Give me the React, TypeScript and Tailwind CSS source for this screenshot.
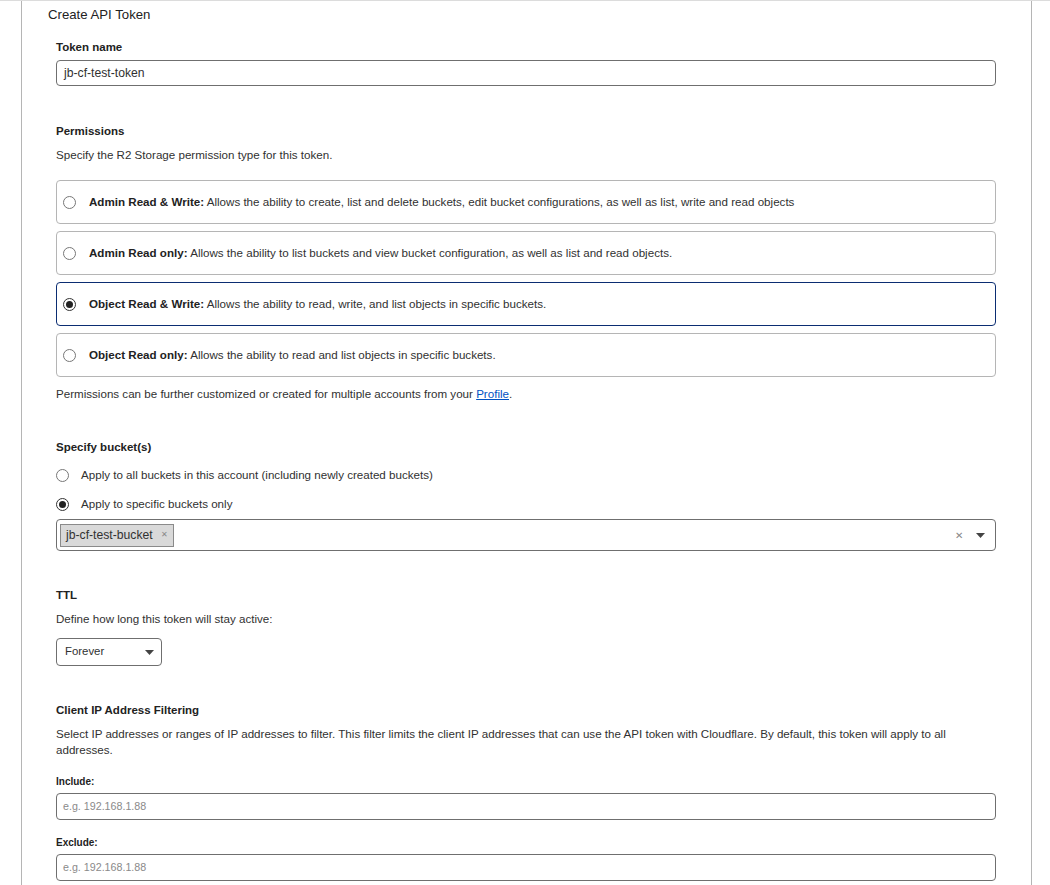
import React from "react";

const font = { fontFamily: '"Liberation Sans", Arial, sans-serif' };

function Radio({ checked }: { checked?: boolean }) {
  return (
    <span
      className={
        "flex h-[13px] w-[13px] shrink-0 items-center justify-center rounded-full border " +
        (checked ? "border-[#333]" : "border-[#777]")
      }
    >
      {checked && <span className="h-[7px] w-[7px] rounded-full bg-[#222]" />}
    </span>
  );
}

function Caret() {
  return (
    <svg width="9" height="5" viewBox="0 0 9 5">
      <path d="M0 0 L9 0 L4.5 5 Z" fill="#444" />
    </svg>
  );
}

const options = [
  {
    t: "Admin Read & Write:",
    d: " Allows the ability to create, list and delete buckets, edit bucket configurations, as well as list, write and read objects",
  },
  {
    t: "Admin Read only:",
    d: " Allows the ability to list buckets and view bucket configuration, as well as list and read objects.",
  },
  {
    t: "Object Read & Write:",
    d: " Allows the ability to read, write, and list objects in specific buckets.",
    sel: true,
  },
  {
    t: "Object Read only:",
    d: " Allows the ability to read and list objects in specific buckets.",
  },
];

export default function App() {
  return (
    <div className="min-h-[885px] border-t border-[#dcdcdc] bg-white" style={font}>
      <div className="ml-[21px] min-h-[884px] w-[1011px] border-x border-[#b5b5b5] pt-[4px] text-[#313131]">
        <div className="pl-[26px] text-[13.2px] leading-[20px] text-[#222]">Create API Token</div>
        <div className="pl-[34px] pr-[35px]">
          <div className="mt-[14px] text-[11.5px] font-bold leading-[16px] text-[#222]">Token name</div>
          <div className="mt-[5px] flex h-[26px] items-center rounded-[4px] border border-[#6f6f6f] px-[7px] text-[12.2px] text-[#313131]">
            jb-cf-test-token
          </div>

          <div className="mt-[37px] text-[11.5px] font-bold leading-[16px] text-[#222]">Permissions</div>
          <div className="mt-[8px] text-[11.6px] leading-[16px]">Specify the R2 Storage permission type for this token.</div>
          <div className="mt-[17px] flex flex-col gap-[7px]">
            {options.map((o) => (
              <div
                key={o.t}
                className={
                  "flex h-[44px] items-center gap-[13px] rounded-[4px] border pl-[6px] text-[11.6px] " +
                  (o.sel ? "border-[#0b2d72]" : "border-[#b5b5b5]")
                }
              >
                <Radio checked={o.sel} />
                <span>
                  <b className="text-[#222]">{o.t}</b>
                  {o.d}
                </span>
              </div>
            ))}
          </div>
          <div className="mt-[9px] text-[11.6px] leading-[16px]">
            Permissions can be further customized or created for multiple accounts from your{" "}
            <span className="text-[#0051c3] underline">Profile</span>.
          </div>

          <div className="mt-[37px] text-[11.5px] font-bold leading-[16px] text-[#222]">Specify bucket(s)</div>
          <div className="mt-[12px] flex items-center gap-[12px] text-[11.6px] leading-[16px]">
            <Radio />
            <span>Apply to all buckets in this account (including newly created buckets)</span>
          </div>
          <div className="mt-[13px] flex items-center gap-[12px] text-[11.6px] leading-[16px]">
            <Radio checked />
            <span>Apply to specific buckets only</span>
          </div>
          <div className="mt-[7px] flex h-[32px] items-center rounded-[4px] border border-[#6f6f6f] pl-[3px] pr-[10px]">
            <div className="flex h-[23px] items-center gap-[8px] border border-[#8a8a8a] bg-[#d9d9d9] pl-[5px] pr-[5px] text-[12.2px] text-[#313131]">
              <span>jb-cf-test-bucket</span>
              <span className="text-[8px] text-[#888]">✕</span>
            </div>
            <div className="flex-1" />
            <span className="text-[10px] text-[#888]">✕</span>
            <span className="ml-[13px]">
              <Caret />
            </span>
          </div>

          <div className="mt-[36px] text-[11.5px] font-bold leading-[16px] text-[#222]">TTL</div>
          <div className="mt-[8px] text-[11.6px] leading-[16px]">Define how long this token will stay active:</div>
          <div className="mt-[11px] flex h-[28px] w-[106px] items-center justify-between rounded-[4px] border border-[#6f6f6f] pl-[8px] pr-[7px] text-[11.4px]">
            <span>Forever</span>
            <Caret />
          </div>

          <div className="mt-[36px] text-[11.5px] font-bold leading-[16px] text-[#222]">Client IP Address Filtering</div>
          <div className="mt-[8px] text-[11.6px] leading-[16px]">
            Select IP addresses or ranges of IP addresses to filter. This filter limits the client IP addresses that can use the API token with Cloudflare. By default, this token will apply to all addresses.
          </div>
          <div className="mt-[17px] text-[10px] font-bold leading-[14px] text-[#222]">Include:</div>
          <div className="mt-[4px] flex h-[27px] items-center rounded-[4px] border border-[#6f6f6f] px-[6px] text-[10.7px] text-[#8a8a8a]">
            e.g. 192.168.1.88
          </div>
          <div className="mt-[16px] text-[10px] font-bold leading-[14px] text-[#222]">Exclude:</div>
          <div className="mt-[4px] flex h-[27px] items-center rounded-[4px] border border-[#6f6f6f] px-[6px] text-[10.7px] text-[#8a8a8a]">
            e.g. 192.168.1.88
          </div>
        </div>
      </div>
    </div>
  );
}
